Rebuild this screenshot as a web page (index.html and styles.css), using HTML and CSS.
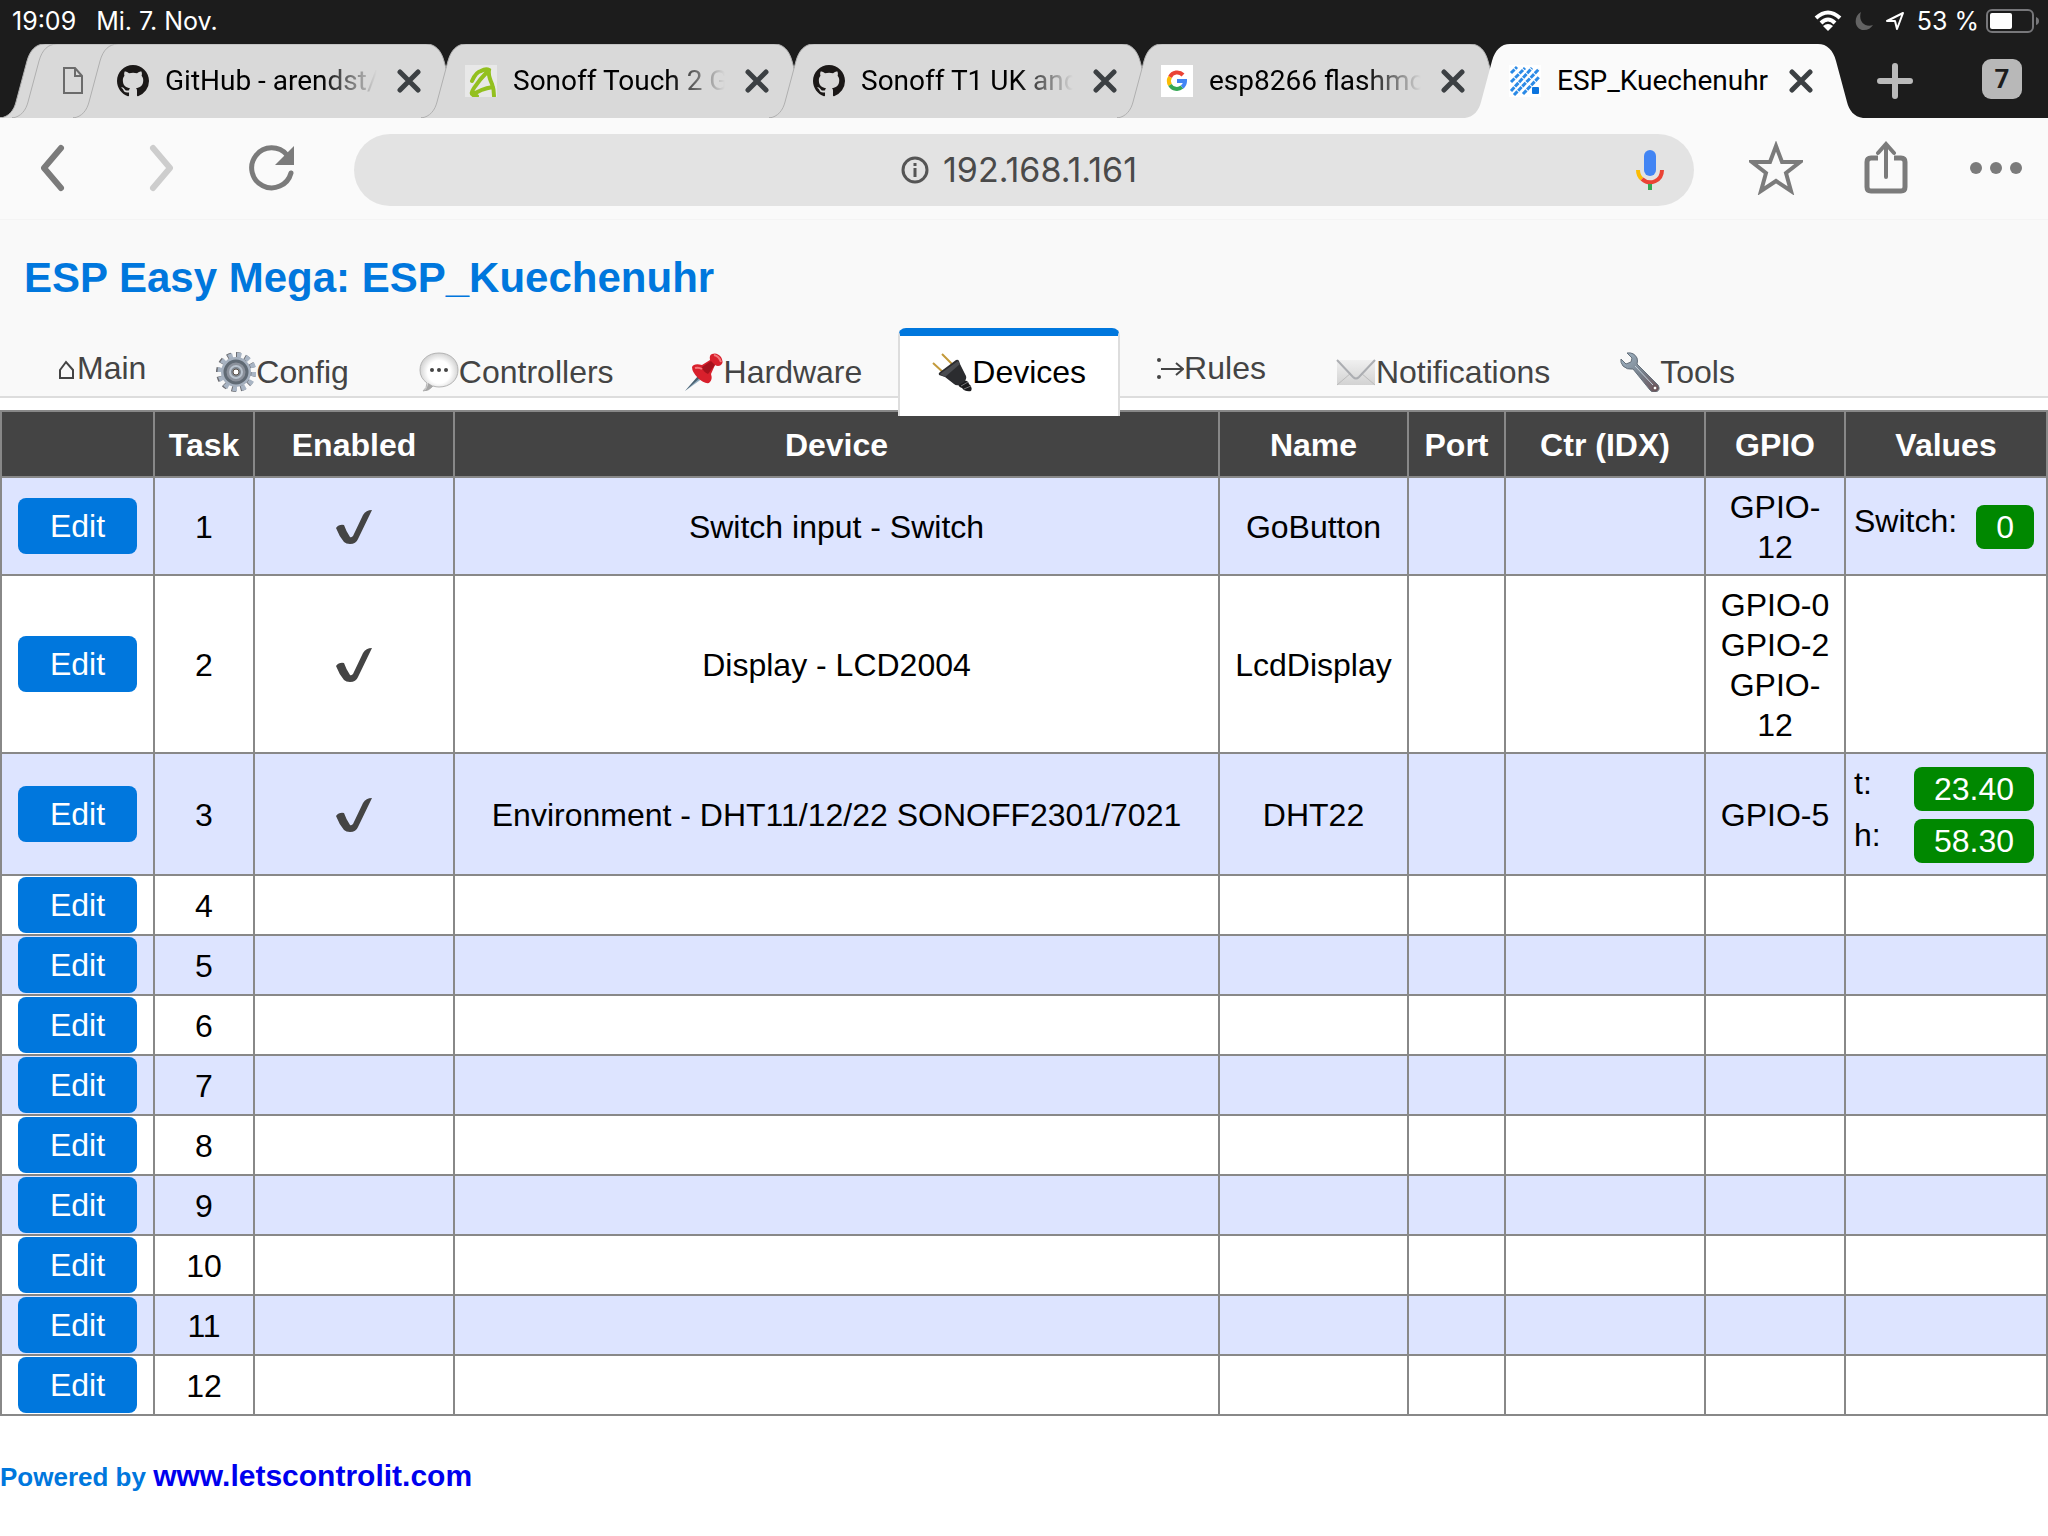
FILE: index.html
```
<!DOCTYPE html>
<html lang="de">
	<head>
		<meta charset="UTF-8">
		<meta name="viewport" content="width=device-width, initial-scale=1">
		<title>ESP_Kuechenuhr</title>
		<link rel="stylesheet" href="styles.css">
	</head>
	<body>
		<!-- shared shapes -->
		<svg class="defs" width="0" height="0" aria-hidden="true">
			<symbol id="tab-shape" viewBox="0 0 398 74">
				<path d="M0 74C9 73 14 66 16 58L27 17C30 6 36 0 45 0H353C362 0 368 6 371 17L382 58C384 66 389 73 398 74"/>
			</symbol>
			<symbol id="close" viewBox="0 0 24 24">
				<path d="M3 3L21 21M21 3L3 21" fill="none" stroke="#3c4043" stroke-width="5" stroke-linecap="round"/>
			</symbol>
			<symbol id="github" viewBox="0 0 16 16">
				<path fill="#1b1817" d="M8 0C3.58 0 0 3.58 0 8c0 3.54 2.29 6.53 5.47 7.59.4.07.55-.17.55-.38 0-.19-.01-.82-.01-1.49-2.01.37-2.53-.49-2.69-.94-.09-.23-.48-.94-.82-1.13-.28-.15-.68-.52-.01-.53.63-.01 1.08.58 1.23.82.72 1.21 1.87.87 2.33.66.07-.52.28-.87.51-1.07-1.78-.2-3.64-.89-3.64-3.95 0-.87.31-1.59.82-2.15-.08-.2-.36-1.02.08-2.12 0 0 .67-.21 2.2.82.64-.18 1.32-.27 2-.27s1.36.09 2 .27c1.53-1.04 2.2-.82 2.2-.82.44 1.1.16 1.92.08 2.12.51.56.82 1.27.82 2.15 0 3.07-1.87 3.75-3.65 3.95.29.25.54.73.54 1.48 0 1.07-.01 1.93-.01 2.2 0 .21.15.46.55.38A8.01 8.01 0 0 0 16 8c0-4.42-3.58-8-8-8z"/>
			</symbol>
			<symbol id="check" viewBox="0 0 36 36">
				<path fill="#444" d="M0 19Q3 15 8 16Q10 22 14 28Q15 29 17 27L27 6Q30 1 36 1L22 30Q20 35 14 35Q10 35 8 33Q3 27 0 19Z"/>
			</symbol>
		</svg>

		<div class="status">
			<span>19:09</span>
			<span>Mi. 7. Nov.</span>
			<div class="status-icons">
				<svg width="28" height="22" viewBox="0 0 28 22" fill="none" stroke="#fff" stroke-width="4">
					<path d="M2 8Q14 -3 26 8M7 13Q14 6 21 13"/>
					<path d="M14 21L9 16Q14 12 19 16Z" fill="#fff" stroke="none"/>
				</svg>
				<svg width="18" height="20" viewBox="0 0 18 20"><path d="M6 1C-2 5-1 19 9 19C13 19 16 17 18 14C9 17 3 9 6 1Z" fill="#636363"/></svg>
				<svg width="18" height="20" viewBox="0 0 18 20" fill="none" stroke="#fff" stroke-width="2" stroke-linejoin="round"><path d="M17 2L11 18L9 10L1 10Z"/></svg>
				<span>53 %</span>
				<svg class="battery" width="54" height="24" viewBox="0 0 54 24">
					<rect x="1" y="1" width="46" height="22" rx="5" fill="none" stroke="#77777a" stroke-width="2"/>
					<rect x="4" y="4" width="22" height="16" rx="2" fill="#fff"/>
					<path d="M50 8Q53 9 53 12Q53 15 50 16Z" fill="#77777a"/>
				</svg>
			</div>
		</div>

		<div class="tabs">
			<div class="tab stacked"><svg class="shape"><use href="#tab-shape"/></svg></div>
			<div class="tab stacked">
				<svg class="shape"><use href="#tab-shape"/></svg>
				<svg class="file" width="22" height="30" viewBox="0 0 22 30" fill="none" stroke="#6b6b6b" stroke-width="2"><path d="M2 2H13L20 10V27H2ZM13 2V10H20"/></svg>
			</div>
			<div class="tab first">
				<svg class="shape"><use href="#tab-shape"/></svg>
				<svg class="favicon"><use href="#github"/></svg>
				<span class="title">GitHub - arendst/Sonoff</span>
				<button class="close" aria-label="Close tab"><svg><use href="#close"/></svg></button>
			</div>
			<div class="tab">
				<svg class="shape"><use href="#tab-shape"/></svg>
				<svg class="favicon" viewBox="0 0 32 32">
					<rect width="32" height="32" fill="#e8e8e8"/>
					<path d="M7 16Q11 7 16 6Q21 3 24 5Q23 10 27 19Q29 24 29 31M23 6Q15 14 9 23Q5 29 8 30Q15 24 28 22M7 29L12 31" fill="none" stroke="#93c01f" stroke-width="4" stroke-linecap="round"/>
				</svg>
				<span class="title">Sonoff Touch 2 Gang</span>
				<button class="close" aria-label="Close tab"><svg><use href="#close"/></svg></button>
			</div>
			<div class="tab">
				<svg class="shape"><use href="#tab-shape"/></svg>
				<svg class="favicon"><use href="#github"/></svg>
				<span class="title">Sonoff T1 UK and EU</span>
				<button class="close" aria-label="Close tab"><svg><use href="#close"/></svg></button>
			</div>
			<div class="tab">
				<svg class="shape"><use href="#tab-shape"/></svg>
				<svg class="favicon" viewBox="0 0 32 32" fill="none" stroke-width="4">
					<rect width="32" height="32" fill="#fff"/>
					<path d="M22 10A8 8 0 0 0 9 12" stroke="#ea4335"/>
					<path d="M9 12A8 8 0 0 0 9 20" stroke="#fbbc05"/>
					<path d="M9 20A8 8 0 0 0 21 22" stroke="#34a853"/>
					<path d="M21 22Q24 20 24 16H16" stroke="#4285f4"/>
				</svg>
				<span class="title">esp8266 flashmode</span>
				<button class="close" aria-label="Close tab"><svg><use href="#close"/></svg></button>
			</div>
			<div class="tab active">
				<svg class="shape"><use href="#tab-shape"/></svg>
				<svg class="favicon" viewBox="0 0 32 32">
					<rect width="32" height="32" fill="#fff"/>
					<path d="M2 8L8 2M2 17L16 3M2 26L23 3M5 30L30 4M14 29L30 12" fill="none" stroke="#2b8ae6" stroke-width="3" stroke-dasharray="5 1"/>
					<rect x="23" y="22" width="7" height="7" rx="1" fill="#0b74de"/>
				</svg>
				<span class="title">ESP_Kuechenuhr</span>
				<button class="close" aria-label="Close tab"><svg><use href="#close"/></svg></button>
			</div>
			<button class="new-tab" aria-label="New tab">
				<svg width="36" height="36" viewBox="0 0 36 36"><path d="M18 3V33M3 18H33" stroke="#bababa" stroke-width="6" stroke-linecap="round"/></svg>
			</button>
			<button class="tab-count">7</button>
		</div>

		<div class="toolbar">
			<button class="tool" aria-label="Back">
				<svg width="28" height="48" viewBox="0 0 28 48"><path d="M23 4L6 24L23 44" fill="none" stroke="#7b7b7b" stroke-width="6" stroke-linecap="round" stroke-linejoin="round"/></svg>
			</button>
			<button class="tool" aria-label="Forward">
				<svg width="28" height="48" viewBox="0 0 28 48"><path d="M5 4L22 24L5 44" fill="none" stroke="#cdcdcd" stroke-width="6" stroke-linecap="round" stroke-linejoin="round"/></svg>
			</button>
			<button class="tool" aria-label="Reload">
				<svg width="46" height="46" viewBox="0 0 46 46"><path d="M42 28A20 20 0 1 1 38 10" fill="none" stroke="#7b7b7b" stroke-width="5" stroke-linecap="round"/><path d="M45 1V20H26Z" fill="#7b7b7b"/></svg>
			</button>
			<form class="address">
				<label for="url"><svg width="28" height="28" viewBox="0 0 28 28"><circle cx="14" cy="14" r="12" fill="none" stroke="#555" stroke-width="3"/><path d="M14 12V21M14 7V10" stroke="#555" stroke-width="3"/></svg></label>
				<input id="url" type="text" value="192.168.1.161">
				<button class="mic" type="button" aria-label="Voice search">
					<svg width="28" height="40" viewBox="0 0 28 40" fill="none" stroke-width="4">
						<rect x="8" y="0" width="12" height="26" rx="6" fill="#4285f4"/>
						<path d="M2 20Q2 26 6 29" stroke="#fbbc05"/>
						<path d="M6 29C14 36 26 31 26 20" stroke="#ea4335"/>
						<path d="M14 34V40" stroke="#34a853"/>
					</svg>
				</button>
			</form>
			<button class="tool" aria-label="Bookmark">
				<svg width="54" height="54" viewBox="0 0 54 54"><path d="M27 5L33 21L51 21L37 32L42 50L27 40L12 50L17 32L3 21L21 21Z" fill="none" stroke="#7b7b7b" stroke-width="4"/></svg>
			</button>
			<button class="tool" aria-label="Share">
				<svg width="44" height="54" viewBox="0 0 44 54" fill="none" stroke="#7b7b7b"><path d="M14 17H7Q3 17 3 21V46Q3 50 7 50H37Q41 50 41 46V21Q41 17 37 17H30" stroke-width="5"/><path d="M22 36V4M14 12L22 3L30 12" stroke-width="4" stroke-linecap="round"/></svg>
			</button>
			<button class="tool" aria-label="Menu">
				<svg width="54" height="14" viewBox="0 0 54 14" fill="#7b7b7b"><circle cx="7" cy="7" r="6"/><circle cx="27" cy="7" r="6"/><circle cx="47" cy="7" r="6"/></svg>
			</button>
		</div>

		<header class="headermenu">
			<h1>ESP Easy Mega: ESP_Kuechenuhr</h1>
			<nav class="menubar">
				<a class="menu" href="#main">
					<svg width="22" height="28" viewBox="0 0 22 28"><path d="M5 26V18L11 10L18 18V26Z" fill="none" stroke="#444" stroke-width="2"/></svg>Main
				</a>
				<a class="menu" href="#config">
					<svg class="emoji" viewBox="0 0 40 40" fill="none">
						<circle cx="20" cy="20" r="17" stroke="#6c6d72" stroke-width="6" pathLength="24" stroke-dasharray="1 1"/>
						<circle cx="21" cy="20" r="17" stroke="#a9b5c4" stroke-width="5" pathLength="24" stroke-dasharray="1 1"/>
						<circle cx="20" cy="20" r="15" fill="#a5b0be"/>
						<circle cx="20" cy="20" r="11" fill="#8b919b" stroke="#606a74" stroke-width="3"/>
						<circle cx="20" cy="20" r="6" fill="#7f8790" stroke="#b8c2cd" stroke-width="2"/>
						<circle cx="20" cy="20" r="3" fill="#fff" stroke="#5a5048" stroke-width="1"/>
					</svg>Config
				</a>
				<a class="menu" href="#controllers">
					<svg class="emoji" viewBox="0 0 40 40">
						<defs>
							<radialGradient id="bubble"><stop offset=".6" stop-color="#fff"/><stop offset="1" stop-color="#d4d4d4"/></radialGradient>
						</defs>
						<path d="M20 1C31 1 39 8 39 18S31 35 20 35Q17 35 14 34Q10 39 4 39Q8 36 8 31Q1 26 1 18C1 8 9 1 20 1Z" fill="url(#bubble)" stroke="#b4b4b4" stroke-width="1"/>
						<path d="M5 39Q10 39 14 34L9 31Q9 36 5 39Z" fill="#a6a6a6"/>
						<circle cx="13" cy="18" r="2" fill="#444"/><circle cx="20" cy="18" r="2" fill="#444"/><circle cx="27" cy="18" r="2" fill="#444"/>
					</svg>Controllers
				</a>
				<a class="menu" href="#hardware">
					<svg class="emoji" viewBox="0 0 40 40">
						<path d="M15 23L19 26L1 39Z" fill="#8da9bd"/>
						<path d="M15 23L17 25L1 39Z" fill="#49606f"/>
						<path d="M8 15Q10 11 18 13L26 8Q25 3 28 2Q33 0 37 5Q40 10 37 13Q34 15 31 13L27 22Q29 28 25 31Q20 32 14 26Q8 20 8 15Z" fill="#d8202c"/>
						<path d="M27 9L31 13L24 22Q19 20 18 15Z" fill="#a5121d"/>
						<path d="M30 3Q35 4 37 10M11 16Q15 15 18 17" fill="none" stroke="#f4767a" stroke-width="2"/>
					</svg>Hardware
				</a>
				<a class="menu active" href="#devices">
					<svg class="emoji" viewBox="0 0 40 40">
						<path d="M1 11L13 22M10 2L22 14" stroke="#c39a3b" stroke-width="2"/>
						<path d="M29 29Q36 27 37 32Q41 35 39 39Q33 40 30 36Q26 35 26 31Z" fill="#1c1c1e"/>
						<path d="M7 23Q6 21 8 20L24 8Q26 7 27 9L28 12L34 24Q35 27 32 30L27 33Q24 34 22 32L13 25Z" fill="#2b2c2f"/>
						<path d="M8 22L26 9L28 12L13 25Z" fill="#4a4c50"/>
						<path d="M29 34L36 30M32 37L39 34" stroke="#77777a" stroke-width="1"/>
					</svg>Devices
				</a>
				<a class="menu" href="#rules">
					<svg width="28" height="30" viewBox="0 0 28 30"><circle cx="3" cy="8" r="2" fill="#444"/><circle cx="3" cy="25" r="2" fill="#444"/><path d="M5 17H26M20 11L27 17L20 23" fill="none" stroke="#444" stroke-width="2"/></svg>Rules
				</a>
				<a class="menu" href="#notifications">
					<svg class="emoji" viewBox="0 0 40 40">
						<defs>
							<linearGradient id="paper" x2="0" y2="1"><stop offset="0" stop-color="#f0f0f0"/><stop offset="1" stop-color="#d2d2d2"/></linearGradient>
						</defs>
						<rect x="1" y="8" width="38" height="25" fill="url(#paper)"/>
						<path d="M1 33L15 21M39 33L25 21" stroke="#bcbcbc" stroke-width="1"/>
						<path d="M1 8L17 25Q20 28 23 25L39 8" fill="none" stroke="#acaeb2" stroke-width="2"/>
					</svg>Notifications
				</a>
				<a class="menu" href="#tools">
					<svg class="emoji" viewBox="0 0 40 40">
						<defs>
							<linearGradient id="steel" x2="1" y2="1"><stop offset="0" stop-color="#a4b9c9"/><stop offset=".5" stop-color="#78828e"/><stop offset="1" stop-color="#6c5055"/></linearGradient>
						</defs>
						<path d="M7 1Q14 0 17 6Q18 9 17 12L38 33Q41 38 36 40Q32 41 30 38L13 17Q7 18 3 14Q0 10 1 7L6 12L11 10L12 6Z" fill="url(#steel)" stroke="#65707b" stroke-width="1"/>
						<path d="M15 14L33 33" stroke="#c5d0da" stroke-width="1"/>
						<circle cx="35" cy="36" r="2" fill="#fff" stroke="#5b464a" stroke-width="1"/>
					</svg>Tools
				</a>
			</nav>
		</header>

		<table class="multirow">
			<colgroup>
				<col class="c-edit"><col class="c-task"><col class="c-enabled"><col><col class="c-name">
				<col class="c-port"><col class="c-ctr"><col class="c-gpio"><col class="c-values">
			</colgroup>
			<thead>
				<tr>
					<th></th>
					<th>Task</th>
					<th>Enabled</th>
					<th>Device</th>
					<th>Name</th>
					<th>Port</th>
					<th>Ctr (IDX)</th>
					<th>GPIO</th>
					<th>Values</th>
				</tr>
			</thead>
			<tbody>
				<tr>
					<td class="edit"><a class="button" href="#1">Edit</a></td>
					<td>1</td>
					<td><svg class="check" role="img" aria-label="enabled"><use href="#check"/></svg></td>
					<td>Switch input - Switch</td>
					<td>GoButton</td>
					<td></td>
					<td></td>
					<td>GPIO-<wbr>12</td>
					<td><div class="value"><span>Switch:</span><span class="badge">0</span></div></td>
				</tr>
				<tr>
					<td class="edit"><a class="button" href="#2">Edit</a></td>
					<td>2</td>
					<td><svg class="check" role="img" aria-label="enabled"><use href="#check"/></svg></td>
					<td>Display - LCD2004</td>
					<td>LcdDisplay</td>
					<td></td>
					<td></td>
					<td>GPIO-0<br>GPIO-2<br>GPIO-<wbr>12</td>
					<td></td>
				</tr>
				<tr>
					<td class="edit"><a class="button" href="#3">Edit</a></td>
					<td>3</td>
					<td><svg class="check" role="img" aria-label="enabled"><use href="#check"/></svg></td>
					<td>Environment - DHT11/12/22 SONOFF2301/7021</td>
					<td>DHT22</td>
					<td></td>
					<td></td>
					<td>GPIO-5</td>
					<td>
						<div class="value"><span>t:</span><span class="badge">23.40</span></div>
						<div class="value"><span>h:</span><span class="badge">58.30</span></div>
					</td>
				</tr>
				<tr><td class="edit"><a class="button" href="#4">Edit</a></td><td>4</td><td></td><td></td><td></td><td></td><td></td><td></td><td></td></tr>
				<tr><td class="edit"><a class="button" href="#5">Edit</a></td><td>5</td><td></td><td></td><td></td><td></td><td></td><td></td><td></td></tr>
				<tr><td class="edit"><a class="button" href="#6">Edit</a></td><td>6</td><td></td><td></td><td></td><td></td><td></td><td></td><td></td></tr>
				<tr><td class="edit"><a class="button" href="#7">Edit</a></td><td>7</td><td></td><td></td><td></td><td></td><td></td><td></td><td></td></tr>
				<tr><td class="edit"><a class="button" href="#8">Edit</a></td><td>8</td><td></td><td></td><td></td><td></td><td></td><td></td><td></td></tr>
				<tr><td class="edit"><a class="button" href="#9">Edit</a></td><td>9</td><td></td><td></td><td></td><td></td><td></td><td></td><td></td></tr>
				<tr><td class="edit"><a class="button" href="#10">Edit</a></td><td>10</td><td></td><td></td><td></td><td></td><td></td><td></td><td></td></tr>
				<tr><td class="edit"><a class="button" href="#11">Edit</a></td><td>11</td><td></td><td></td><td></td><td></td><td></td><td></td><td></td></tr>
				<tr><td class="edit"><a class="button" href="#12">Edit</a></td><td>12</td><td></td><td></td><td></td><td></td><td></td><td></td><td></td></tr>
			</tbody>
		</table>

		<footer>Powered by <a href="#letscontrolit">www.letscontrolit.com</a></footer>
	</body>
</html>
```
FILE: styles.css
```
* {
	box-sizing: border-box;
	margin: 0;
	padding: 0;
}

body {
	background: #fff;
	color: #000;
	font: 32px/40px "Liberation Sans", Arial, sans-serif;
}

button {
	border: 0;
	background: none;
	cursor: pointer;
}

svg {
	flex: none;
}

.defs {
	position: absolute;
}

/* status bar */
.status {
	display: flex;
	align-items: center;
	gap: 20px;
	height: 44px;
	padding: 0 8px 2px 12px;
	background: #1c1c1c;
	color: #fff;
	font: 25px/40px Inter, sans-serif;
}

.status-icons {
	display: flex;
	align-items: center;
	gap: 13px;
	margin-left: auto;
}

.battery {
	margin-left: -6px;
}

/* browser tabs */
.tabs {
	display: flex;
	align-items: center;
	height: 74px;
	background: #1c1c1c;
	overflow: hidden;
}

.tab {
	display: flex;
	align-items: center;
	flex: none;
	width: 398px;
	height: 74px;
	margin-left: -50px;
	padding: 0 50px 0 44px;
	position: relative;
	font: 28px/40px Roboto, sans-serif;
}

.tab.stacked {
	margin-left: 0;
	padding-left: 50px;
}

.tab.stacked + .stacked {
	margin-left: -386px;
}

.tab.first {
	margin-left: -337px;
}

.shape {
	position: absolute;
	left: 0;
	top: 0;
	width: 398px;
	height: 74px;
	fill: #d9d9d9;
	stroke: #b0b0b0;
	stroke-width: 1;
}

.tabs .tab:not(.active) {
	border-bottom: 1px solid #b0b0b0;
}

.active .shape {
	fill: #fafafa;
	stroke: none;
}

.favicon,
.file,
.title,
.close {
	position: relative;
}

.favicon {
	width: 32px;
	height: 32px;
}

.title {
	flex: 1;
	min-width: 0;
	margin: 0 20px 0 16px;
	overflow: hidden;
	white-space: nowrap;
	-webkit-mask-image: linear-gradient(to left, transparent, #000 56px);
	mask-image: linear-gradient(to left, transparent, #000 56px);
}

.active .title {
	-webkit-mask-image: none;
	mask-image: none;
}

.close,
.close svg {
	display: block;
	width: 24px;
	height: 24px;
}

.new-tab {
	display: flex;
	margin-left: 14px;
}

.tab-count {
	width: 40px;
	height: 40px;
	margin: 0 26px 4px auto;
	border-radius: 9px;
	background: #b8b8b8;
	color: #1c1c1c;
	font: bold 26px/40px Roboto, sans-serif;
}

/* address bar */
.toolbar {
	display: flex;
	align-items: flex-start;
	gap: 6px;
	height: 102px;
	padding-top: 16px;
	background: #fafafa;
	border-bottom: 1px solid #f4f4f4;
}

.tool {
	display: flex;
	align-items: center;
	justify-content: center;
	width: 104px;
	height: 68px;
}

.address {
	display: flex;
	align-items: center;
	justify-content: center;
	flex: 1;
	height: 72px;
	margin: 0 24px;
	border-radius: 36px;
	background: #e3e3e3;
	position: relative;
}

.address label {
	display: flex;
	margin-right: 14px;
}

.address input {
	width: 204px;
	border: 0;
	outline: 0;
	background: none;
	color: #4a4a4a;
	font: 34px/40px Inter, sans-serif;
}

.mic {
	display: flex;
	position: absolute;
	right: 30px;
}

/* page header */
.headermenu {
	padding-top: 34px;
	background: #f9f9f9;
	border-bottom: 2px solid #ddd;
}

h1 {
	padding: 0 24px;
	color: #07d;
	font-size: 42px;
	line-height: 48px;
}

.menubar {
	display: flex;
	align-items: flex-start;
	gap: 2px;
	margin-top: 26px;
	padding-left: 21px;
}

.menu {
	display: flex;
	align-items: flex-start;
	padding: 12px 32px 0;
	border: solid transparent;
	border-width: 8px 2px 0;
	color: #444;
	text-decoration: none;
}

.menu:has(.emoji) {
	align-items: center;
	line-height: 48px;
}

.menu:not(:has(.emoji)) svg {
	margin-top: 4px;
}

.emoji {
	width: 40px;
	height: 40px;
}

.menu.active {
	margin-bottom: -20px;
	padding-bottom: 20px;
	position: relative;
	z-index: 1;
	border-color: #07d #ddd;
	border-radius: 8px 8px 0 0;
	background: #fff;
	color: #000;
}

/* device list */
.multirow {
	width: 100%;
	margin-top: 12px;
	border-collapse: collapse;
	table-layout: fixed;
}

.c-edit { width: 153px; }
.c-task { width: 100px; }
.c-enabled { width: 200px; }
.c-name { width: 189px; }
.c-port { width: 97px; }
.c-ctr { width: 200px; }
.c-gpio { width: 140px; }
.c-values { width: 202px; }

th,
td {
	padding: 9px 8px 7px;
	border: 2px solid #888;
	text-align: center;
}

th {
	padding: 13px 4px 11px;
	background: #444;
	color: #fff;
}

tbody tr:nth-child(odd) {
	background: #dde4ff;
}

.edit {
	padding: 1px 0;
}

.button {
	display: block;
	width: fit-content;
	margin: 0 auto;
	padding: 8px 32px;
	border-radius: 8px;
	background: #07d;
	color: #fff;
	text-decoration: none;
}

.check {
	display: block;
	width: 36px;
	height: 36px;
	margin: 0 auto;
}

.value {
	display: flex;
	justify-content: space-between;
}

.badge {
	margin: 4px;
	padding: 2px 20px;
	border-radius: 8px;
	background: #080;
	color: #fff;
}

footer {
	margin-top: 40px;
	color: #07d;
	font-size: 26px;
	font-weight: bold;
}

footer a {
	color: #00e;
	font-size: 30px;
	text-decoration: none;
}
```
